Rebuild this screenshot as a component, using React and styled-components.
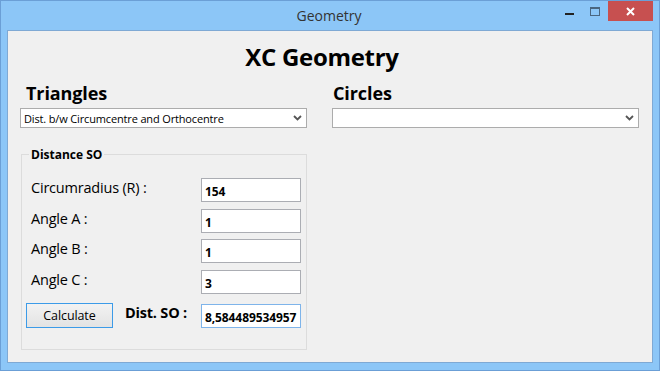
import { Fragment } from "react";
import styled, { createGlobalStyle } from "styled-components";

const Global = createGlobalStyle`
  html, body {
    margin: 0;
    padding: 0;
    background: #8cc6f7;
  }
  * {
    box-sizing: border-box;
  }
`;

const FONT = `"Open Sans", "Noto Sans", "Liberation Sans", sans-serif`;

const Window = styled.div`
  width: 660px;
  height: 371px;
  background: #8cc6f7;
  border: 1px solid #6b9fd6;
  display: flex;
  flex-direction: column;
  font-family: ${FONT};
  overflow: hidden;
`;

const TitleBar = styled.div`
  height: 29px;
  display: flex;
  align-items: flex-start;
  position: relative;
`;

const Title = styled.div`
  flex: 1;
  text-align: center;
  font-size: 14px;
  color: #333;
  padding-top: 5px;
  padding-right: 2px;
`;

const Controls = styled.div`
  position: absolute;
  right: 6px;
  top: 0;
  display: flex;
  align-items: flex-start;
`;

const CtrlButton = styled.div`
  width: ${({ wide }) => (wide ? "45px" : "26px")};
  height: 20px;
  display: flex;
  align-items: ${({ drop }) => (drop ? "flex-start" : "center")};
  justify-content: center;
  padding-top: ${({ drop }) => drop || 0}px;
  background: ${({ close }) => (close ? "#c75050" : "transparent")};
`;

const Client = styled.div`
  flex: 1;
  margin: 0 6px 7px 6px;
  background: #f0f0f0;
  border: 1px solid #7fa9d4;
  display: flex;
  flex-direction: column;
  color: #000;
`;

const Heading = styled.div`
  font-size: 24px;
  font-weight: 700;
  text-align: center;
  padding: 11px 16px 0 0;
  line-height: 30px;
  letter-spacing: -0.3px;
`;

const Columns = styled.div`
  display: flex;
  padding: 9px 0 0 12px;
  gap: 25px;
`;

const Column = styled.div`
  width: ${({ w }) => w}px;
  display: flex;
  flex-direction: column;
`;

const SectionTitle = styled.div`
  font-size: 18px;
  font-weight: 700;
  line-height: 24px;
  padding-left: ${({ indent }) => indent}px;
  margin-bottom: 3px;
  letter-spacing: -0.1px;
`;

const Select = styled.div`
  height: 20px;
  background: #fff;
  border: 1px solid #acacac;
  display: flex;
  align-items: center;
  justify-content: space-between;
  padding: 0 4px 0 3px;
  font-size: 11px;
  letter-spacing: -0.15px;
`;

const Group = styled.fieldset`
  margin: 18px 0 0 1px;
  padding: 15px 0 21px 8px;
  border: 1px solid #dcdcdc;
  display: grid;
  grid-template-columns: 171px 100px;
  row-gap: 6.5px;
  align-items: center;
`;

const Legend = styled.legend`
  font-size: 12px;
  font-weight: 700;
  padding: 0 2px;
  margin-left: -1px;
`;

const Label = styled.div`
  font-size: 14.5px;
  align-self: start;
  padding-left: 1px;
  line-height: 19px;
  font-weight: ${({ bold }) => (bold ? 700 : 400)};
  letter-spacing: -0.2px;
`;

const Input = styled.div`
  height: 24px;
  background: #fff;
  border: 1px solid ${({ active }) => (active ? "#7eb4ea" : "#abadb3")};
  font-size: 12px;
  font-weight: 700;
  display: flex;
  align-items: center;
  padding: 3px 0 0 3px;
  letter-spacing: -0.1px;
  overflow: hidden;
  white-space: nowrap;
  margin-top: ${({ gapTop }) => gapTop || 0}px;
`;

const LastRow = styled.div`
  display: flex;
  align-items: center;
  gap: 11px;
  margin-top: 3px;
`;

const Button = styled.div`
  width: 87px;
  height: 25px;
  margin-left: -4px;
  border: 1px solid #3c9be8;
  background: linear-gradient(#f2f2f2, #e3e3e3);
  font-size: 12.5px;
  display: flex;
  align-items: center;
  justify-content: center;
  letter-spacing: -0.1px;
`;

const Chevron = () => (
  <svg width="9" height="6" viewBox="0 0 9 6">
    <path d="M1 1 L4.5 4.5 L8 1" fill="none" stroke="#555" strokeWidth="1.8" />
  </svg>
);

const fields = [
  ["Circumradius (R) :", "154"],
  ["Angle A :", "1"],
  ["Angle B :", "1"],
  ["Angle C :", "3"],
];

export default function App() {
  return (
    <>
      <Global />
      <Window>
        <TitleBar>
          <Title>Geometry</Title>
          <Controls>
            <CtrlButton drop={12}>
              <svg width="9" height="3">
                <rect x="0" y="0" width="9" height="2" fill="#222" />
              </svg>
            </CtrlButton>
            <CtrlButton drop={6}>
              <svg width="10" height="9">
                <rect x="0.5" y="0.5" width="9" height="8" fill="none" stroke="#4a6680" />
                <rect x="0" y="0" width="10" height="2" fill="#4a6680" />
              </svg>
            </CtrlButton>
            <CtrlButton wide close>
              <svg width="9" height="9">
                <path d="M1 1 L8 8 M8 1 L1 8" stroke="#fff" strokeWidth="2" />
              </svg>
            </CtrlButton>
          </Controls>
        </TitleBar>
        <Client>
          <Heading>XC Geometry</Heading>
          <Columns>
            <Column w={287}>
              <SectionTitle indent={6}>Triangles</SectionTitle>
              <Select>
                <span>Dist. b/w Circumcentre and Orthocentre</span>
                <Chevron />
              </Select>
              <Group>
                <Legend>Distance SO</Legend>
                {fields.map(([label, value]) => (
                  <Fragment key={label}>
                    <Label>{label}</Label>
                    <Input>{value}</Input>
                  </Fragment>
                ))}
                <LastRow>
                  <Button>Calculate</Button>
                  <Label bold>Dist. SO :</Label>
                </LastRow>
                <Input active gapTop={3}>8,584489534957</Input>
              </Group>
            </Column>
            <Column w={307}>
              <SectionTitle indent={1}>Circles</SectionTitle>
              <Select>
                <span></span>
                <Chevron />
              </Select>
            </Column>
          </Columns>
        </Client>
      </Window>
    </>
  );
}
